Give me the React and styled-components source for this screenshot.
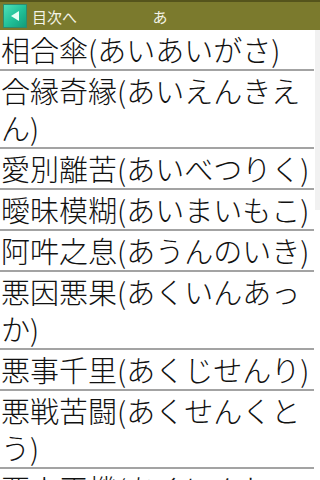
import React from 'react';
import styled, { createGlobalStyle } from 'styled-components';

const GlobalStyle = createGlobalStyle`
  html, body {
    margin: 0;
    padding: 0;
    background: #ffffff;
  }
  body {
    font-family: "Noto Sans CJK JP", "DejaVu Sans", sans-serif;
    overflow: hidden;
  }
`;

const entries = [
  '相合傘(あいあいがさ)',
  '合縁奇縁(あいえんきえん)',
  '愛別離苦(あいべつりく)',
  '曖昧模糊(あいまいもこ)',
  '阿吽之息(あうんのいき)',
  '悪因悪果(あくいんあっか)',
  '悪事千里(あくじせんり)',
  '悪戦苦闘(あくせんくとう)',
  '悪人正機(あくにんしょうき)',
];

const Screen = styled.div`
  width: 320px;
  height: 480px;
  overflow: hidden;
  position: relative;
`;

const TitleBar = styled.header`
  height: 28px;
  border-top: 2px solid #55541c;
  background: #7b7a2d;
  display: grid;
  grid-template-columns: 1fr auto 1fr;
  align-items: center;
  color: #f4f4e8;
  font-size: 15px;
`;

const BackButton = styled.div`
  display: flex;
  align-items: center;
  gap: 5px;
  padding-left: 3px;
`;

const BackIcon = styled.span`
  width: 24px;
  height: 24px;
  box-sizing: border-box;
  border: 1px solid #2f8a6e;
  background: linear-gradient(135deg, #4fe0b8 0%, #1fbf97 55%, #139c7a 100%);
  display: flex;
  align-items: center;
  justify-content: center;
`;

const Title = styled.span`
  text-align: center;
`;

const List = styled.ul`
  list-style: none;
  margin: 0;
  padding: 0;
  padding-right: 6px;
`;

const Row = styled.li`
  font-size: 29px;
  font-weight: 300;
  line-height: 37px;
  color: #111111;
  padding: 1px 0 1px 1px;
  border-bottom: 2px solid #a3a3a3;
`;

const ScrollThumb = styled.div`
  position: absolute;
  right: 0;
  top: 30px;
  width: 5px;
  height: 180px;
  background: #f1f1f1;
`;

export default function App() {
  return (
    <Screen>
      <GlobalStyle />
      <TitleBar>
        <BackButton>
          <BackIcon>
            <svg width="10" height="12" viewBox="0 0 10 12">
              <polygon points="9,1 9,11 1,6" fill="#e8fff6" />
            </svg>
          </BackIcon>
          <span>目次へ</span>
        </BackButton>
        <Title>あ</Title>
        <span />
      </TitleBar>
      <List>
        {entries.map((e) => (
          <Row key={e}>{e}</Row>
        ))}
      </List>
      <ScrollThumb />
    </Screen>
  );
}
